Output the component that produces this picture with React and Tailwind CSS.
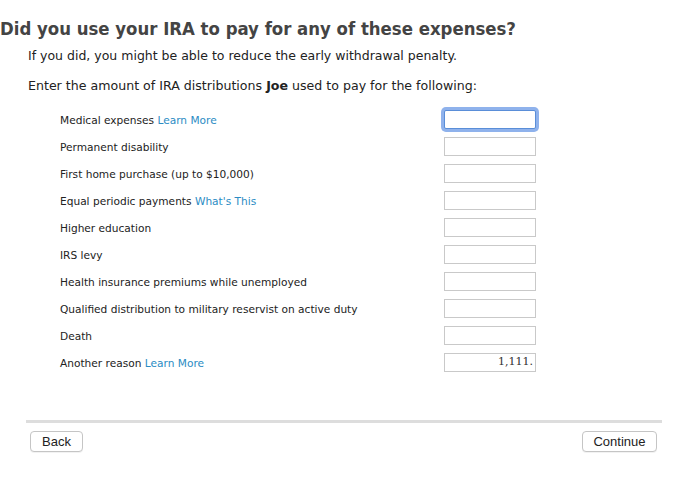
import React from "react";

const rows = [
  { label: "Medical expenses", link: "Learn More", focus: true },
  { label: "Permanent disability" },
  { label: "First home purchase (up to $10,000)" },
  { label: "Equal periodic payments", link: "What's This" },
  { label: "Higher education" },
  { label: "IRS levy" },
  { label: "Health insurance premiums while unemployed" },
  { label: "Qualified distribution to military reservist on active duty" },
  { label: "Death" },
  { label: "Another reason", link: "Learn More", value: "1,111." },
];

export default function App() {
  return (
    <div className="w-[680px] h-[497px] bg-white text-[#222] font-['DejaVu_Sans',sans-serif] overflow-hidden">
      <h1 className="pt-[17px] pl-0 text-[18.4px] leading-[24px] font-bold text-[#444] whitespace-nowrap font-['DejaVu_Sans_Condensed','DejaVu_Sans',sans-serif]">
        Did you use your IRA to pay for any of these expenses?
      </h1>
      <p className="mt-[6px] pl-[28px] text-[12.5px] leading-[18px] whitespace-nowrap">
        If you did, you might be able to reduce the early withdrawal penalty.
      </p>
      <p className="mt-[12px] pl-[28px] text-[12.6px] leading-[18px] whitespace-nowrap">
        Enter the amount of IRA distributions <span className="font-bold">Joe</span> used to pay for the following:
      </p>
      <div className="mt-[11px] flex flex-col">
        {rows.map((r, i) => (
          <div key={i} className="h-[27px] flex items-center">
            <div className="pl-[60px] pt-[2px] w-[444px] text-[10.6px] whitespace-nowrap">
              {r.label}
              {r.link && <span className="text-[#2b8cc4]"> {r.link}</span>}
            </div>
            {r.focus ? (
              <div className="w-[92px] h-[19px] border border-[#5a8ed8] rounded-[2px] ring-[3px] ring-[#8fb2ec] bg-white" />
            ) : (
              <div className="w-[92px] h-[19px] border border-[#c9c9c9] bg-white flex items-center justify-end pr-[2px] text-[11px] font-['DejaVu_Serif',serif] text-[#333]">
                {r.value}
              </div>
            )}
          </div>
        ))}
      </div>
      <div className="mt-[44px] ml-[26px] w-[636px] h-[3px] bg-[#dddddd]" />
      <div className="mt-[8px] ml-[30px] w-[627px] flex justify-between">
        <button className="w-[53px] h-[21px] rounded-[4px] border border-[#c5c5c5] bg-white text-[13px] text-[#222] font-['Liberation_Sans',sans-serif] shadow-[0_1px_0_rgba(0,0,0,0.05)]">
          Back
        </button>
        <button className="w-[75px] h-[21px] rounded-[4px] border border-[#c5c5c5] bg-white text-[13px] text-[#222] font-['Liberation_Sans',sans-serif] shadow-[0_1px_0_rgba(0,0,0,0.05)]">
          Continue
        </button>
      </div>
    </div>
  );
}
